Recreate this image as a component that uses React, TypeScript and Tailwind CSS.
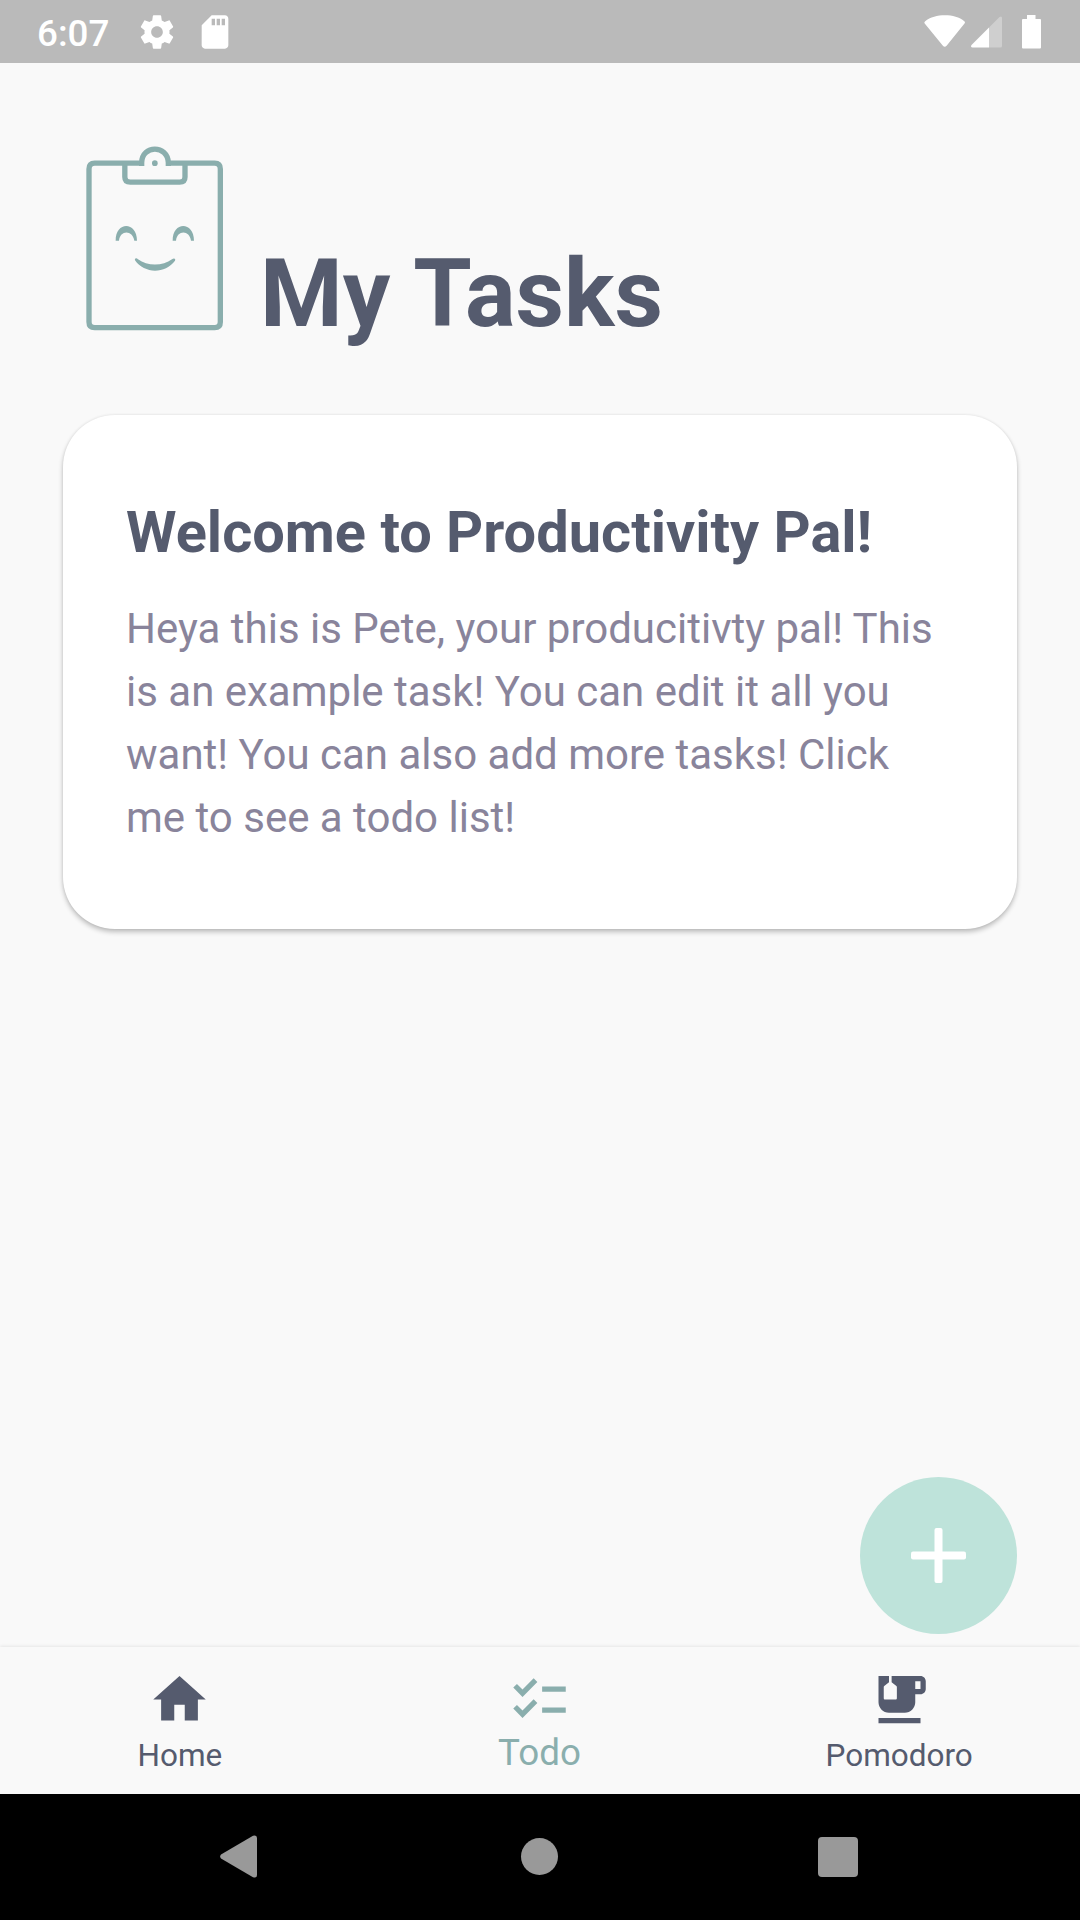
import type { ReactNode } from 'react';

const tabs = [
  {
    name: 'Home',
    active: false,
    icon: 'M10 20v-6h4v6h5v-8h3L12 3 2 12h3v8z',
  },
  {
    name: 'Todo',
    active: true,
    icon: 'M22 7h-9v2h9V7zm0 8h-9v2h9v-2zM5.54 11L2 7.46l1.41-1.41 2.12 2.12 4.24-4.24 1.41 1.41L5.54 11zm0 8L2 15.46l1.41-1.41 2.12 2.12 4.24-4.24 1.41 1.41L5.54 19z',
  },
  {
    name: 'Pomodoro',
    active: false,
    icon: 'M20 3H9v2.4l1.81 1.45c.12.09.19.24.19.39v4.26c0 .28-.22.5-.5.5h-4c-.28 0-.5-.22-.5-.5V7.24c0-.15.07-.3.19-.39L8 5.4V3H4v10c0 2.21 1.79 4 4 4h6c2.21 0 4-1.79 4-4v-3h2c1.11 0 2-.9 2-2V5c0-1.11-.89-2-2-2zm0 5h-2V5h2v3zM4 19h16v2H4z',
  },
];

const tasks = [
  {
    title: 'Welcome to Productivity Pal!',
    desc: 'Heya this is Pete, your producitivty pal! This is an example task! You can edit it all you want! You can also add more tasks! Click me to see a todo list!',
  },
];

function StatusBar() {
  return (
    <div className="h-[63px] shrink-0 bg-[#bababa] text-white flex items-center justify-between pl-[37px] pr-[39px]">
      <div className="flex items-center">
        <span className="text-[36.75px] leading-[63px] font-medium w-[100px] pt-[3px]">6:07</span>
        <svg className="w-[40px] h-[40px]" viewBox="0 0 24 24" fill="currentColor">
          <path d="M19.43 12.98c.04-.32.07-.64.07-.98s-.03-.66-.07-.98l2.11-1.65c.19-.15.24-.42.12-.64l-2-3.46c-.12-.22-.39-.3-.61-.22l-2.49 1c-.52-.4-1.08-.73-1.69-.98l-.38-2.65C14.46 2.18 14.25 2 14 2h-4c-.25 0-.46.18-.49.42l-.38 2.65c-.61.25-1.17.59-1.69.98l-2.49-1c-.23-.09-.49 0-.61.22l-2 3.46c-.13.22-.07.49.12.64l2.11 1.65c-.04.32-.07.65-.07.98s.03.66.07.98l-2.11 1.65c-.19.15-.24.42-.12.64l2 3.46c.12.22.39.3.61.22l2.49-1c.52.4 1.08.73 1.69.98l.38 2.65c.03.24.24.42.49.42h4c.25 0 .46-.18.49-.42l.38-2.65c.61-.25 1.17-.59 1.69-.98l2.49 1c.23.09.49 0 .61-.22l2-3.46c.12-.22.07-.49-.12-.64l-2.11-1.65zM12 15.5c-1.93 0-3.5-1.57-3.5-3.5s1.57-3.5 3.5-3.5 3.5 1.57 3.5 3.5-1.57 3.5-3.5 3.5z" />
        </svg>
        <svg className="w-[40px] h-[40px] ml-[18px]" viewBox="0 0 24 24" fill="currentColor">
          <path d="M18 2h-8L4.02 8 4 20c0 1.1.9 2 2 2h12c1.1 0 2-.9 2-2V4c0-1.1-.9-2-2-2zm-6 6h-2V4h2v4zm3 0h-2V4h2v4zm3 0h-2V4h2v4z" />
        </svg>
      </div>
      <svg className="w-[117px] h-[34px]" viewBox="0 0 117 34" fill="currentColor">
        <path d="M1.2 6.2C11-1.6 31-1.6 40.300 6.200Q41.500 7.300 40.500 8.600L22.600 30.700Q20.700 32.600 18.900 30.700L0.700 8.600Q-0.200 7.300 1.200 6.200Z" />
        <path opacity="0.3" d="M65 12.500L75.500 2Q78 0.500 78 3V31Q78 32.500 76.500 32.500H65Z" />
        <path d="M65 12.500V32.500H48.500Q46.200 32 47.500 30Z" />
        <path d="M103 0H111.500V4H116Q117 4 117 5V32.500Q117 33.500 116 33.500H99Q98 33.500 98 32.500V5Q98 4 99 4H103Z" />
      </svg>
    </div>
  );
}

function Pete() {
  return (
    <svg className="w-[137px] h-[185px] shrink-0" viewBox="78 49 411 555" fill="none" stroke="#8aaead" strokeWidth="16">
      <path d="M245 100.500H104Q87 100.500 87 118V577Q87 594 104 594H464Q481 594 481 577V118Q481 100.500 464 100.500H325" />
      <path d="M194.500 101V142Q194.500 157.500 211 157.500H359Q375 157.500 375 142V101" />
      <path d="M245 109V99C246 45 323 45 325 99V109" />
      <circle cx="284.500" cy="100.500" r="8.500" fill="#8aaead" stroke="none" />
      <g fill="#8aaead" stroke="none">
        <path d="M167 333C166 274 231 274 231 333H223C218 300 180 300 177 333Z" />
        <path d="M338 333C337 274 402 274 402 333H393C389 300 351 300 348 333Z" />
        <path d="M225 392C223 385 230 384 234 389C262 410 308 410 336 389C341 384 348 386 345 393C316 433 253 433 225 392Z" />
      </g>
    </svg>
  );
}

function TaskCard({ title, children }: { title: string; children: ReactNode }) {
  return (
    <div className="mx-[63px] h-[514px] bg-white rounded-[52px] px-[63px] pt-[83px] shadow-[0_3px_5px_rgba(0,0,0,0.24),0_0_3px_rgba(0,0,0,0.08)]">
      <h2 className="text-[57.75px] leading-[68px] font-bold text-[#555b6e]">{title}</h2>
      <p className="mt-[31px] text-[42px] leading-[63px] text-[#89849b]">{children}</p>
    </div>
  );
}

function TabBar() {
  return (
    <div className="h-[147px] shrink-0 flex bg-[#f9f9f9] pr-px shadow-[0_-1px_3px_rgba(0,0,0,0.08)]">
      {tabs.map((tab) => (
        <div
          key={tab.name}
          className={`flex-1 flex flex-col items-center pt-[21px] ${tab.active ? 'text-[#8aaead]' : 'text-[#555b6e]'}`}
        >
          <svg className="w-[63px] h-[63px]" viewBox="0 0 24 24" fill="currentColor">
            <path d={tab.icon} />
          </svg>
          <span className={tab.active ? 'text-[36.75px] leading-[44px]' : 'text-[31.5px] leading-[40px] mt-[5px]'}>
            {tab.name}
          </span>
        </div>
      ))}
    </div>
  );
}

function SystemNav() {
  return (
    <div className="h-[126px] shrink-0 bg-black flex items-center pl-[220px] pb-px">
      <svg className="w-[37px] h-[43px]" viewBox="0 0 37 43" fill="#999999">
        <path d="M1 19.500L33 0.800Q37 -0.500 37 3V40Q37 43.500 33 42.200L1 23.500Q-0.700 21.500 1 19.500Z" />
      </svg>
      <div className="w-[37px] h-[37px] ml-[264px] rounded-full bg-[#999999]"></div>
      <div className="w-[40px] h-[40px] ml-[260px] rounded-[4px] bg-[#999999]"></div>
    </div>
  );
}

export default function App() {
  return (
    <div className="w-[1080px] h-[1920px] flex flex-col bg-[#f9f9f9] font-['Roboto',sans-serif] overflow-hidden">
      <StatusBar />
      <main className="flex-1 flex flex-col">
        <header className="flex items-start pl-[86px] pt-[83px] h-[352px]">
          <Pete />
          <h1 className="ml-[37px] mt-[92px] text-[94.5px] leading-[112px] font-bold text-[#555b6e] [word-spacing:2px]">My Tasks</h1>
        </header>
        {tasks.map((task) => (
          <TaskCard key={task.title} title={task.title}>
            {task.desc}
          </TaskCard>
        ))}
        <button className="mt-auto mb-[13px] mr-[63px] self-end w-[157.5px] h-[157.5px] rounded-full bg-[#bee3da] flex items-center justify-center">
          <svg className="w-[55px] h-[55px]" viewBox="0 0 55 55" fill="white">
            <rect x="0" y="23.500" width="55" height="8" rx="2" />
            <rect x="23.500" y="0" width="8" height="55" rx="2" />
          </svg>
        </button>
      </main>
      <TabBar />
      <SystemNav />
    </div>
  );
}
